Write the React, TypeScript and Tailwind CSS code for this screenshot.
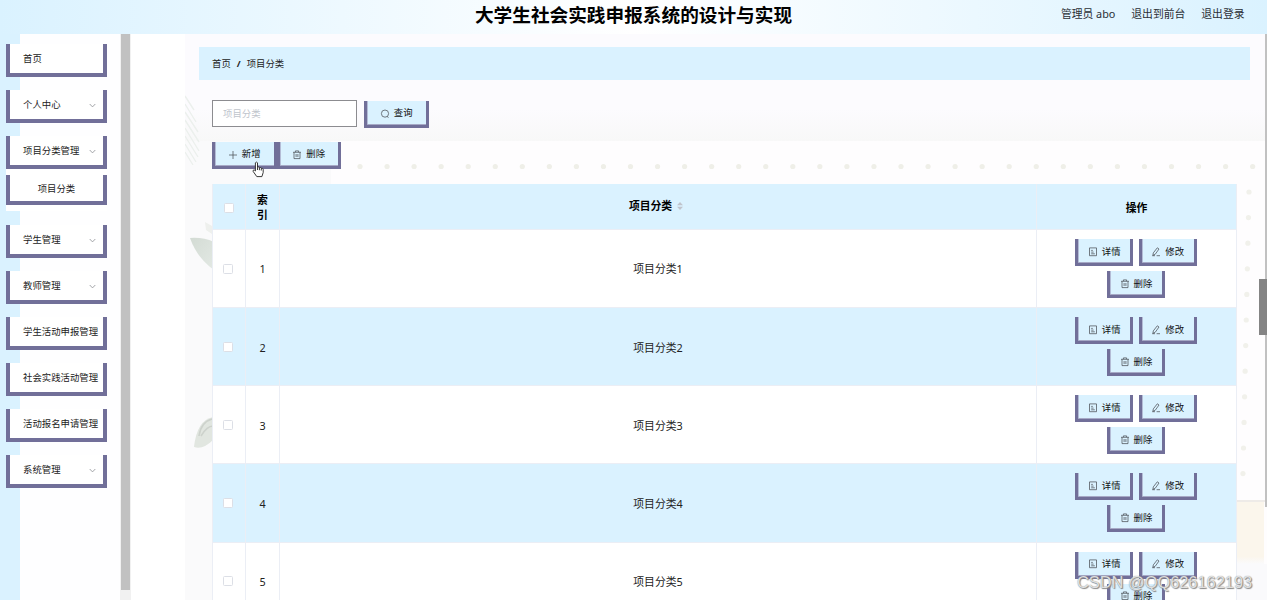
import React from 'react';

const MENU_TOP = [
  { label: '首页', arrow: false },
  { label: '个人中心', arrow: true },
];
const MENU_BOTTOM = [
  { label: '学生管理', arrow: true },
  { label: '教师管理', arrow: true },
  { label: '学生活动申报管理', arrow: false },
  { label: '社会实践活动管理', arrow: false },
  { label: '活动报名申请管理', arrow: false },
  { label: '系统管理', arrow: true },
];
const ROWS = [1, 2, 3, 4, 5];

function Chevron() {
  return (
    <svg className="h-[7px] w-[7px] shrink-0" viewBox="0 0 7 7" fill="none" stroke="#8c8e93" strokeWidth="0.8">
      <path d="M0.7 2L3.5 4.9L6.3 2" />
    </svg>
  );
}

function MenuItem({ label, arrow }: { label: string; arrow: boolean }) {
  return (
    <div className="mb-[13px] flex h-[33px] w-[101px] shrink-0 items-center justify-between border-4 border-t-0 border-[#716f99] bg-white pt-[2px] pr-[7px] pl-[13px] text-[9.4px] whitespace-nowrap text-[#222]">
      <span>{label}</span>
      {arrow && <Chevron />}
    </div>
  );
}

type IconName = 'search' | 'plus' | 'trash' | 'doc' | 'edit';

function Icon({ name }: { name: IconName }) {
  return (
    <svg className="h-[10px] w-[10px] shrink-0" viewBox="0 0 10 10" fill="none" stroke="#4c5057" strokeWidth="0.75">
      {name === 'search' && (
        <>
          <circle cx="5" cy="4.6" r="3.6" />
          <path d="M7.2 7.3L8.4 8.8" />
        </>
      )}
      {name === 'plus' && <path d="M5 1V9M1 5H9" />}
      {name === 'trash' && <path d="M1 2.3H9M3.4 2.2V0.9H6.6V2.2M2 2.4V8.6H8V2.4M4.1 4V7M5.9 4V7" />}
      {name === 'doc' && <path d="M1.5 0.9H8.5V8.7H1.5ZM3.2 3.4H4.8M3.2 5.1H5.6M3.2 6.8H6.8" />}
      {name === 'edit' && <path d="M6.3 0.8L8 2L4.2 7.3L1.9 8.3L2.3 5.9ZM1.2 8.7H4M5.6 8.7H9" />}
    </svg>
  );
}

function Button({ icon, label, wide }: { icon: IconName; label: string; wide?: boolean }) {
  return (
    <button
      className={
        (wide ? 'w-[64.5px] ' : 'w-[58px] ') +
        'flex h-[27px] shrink-0 items-center justify-center gap-[4px] border-x-3 border-b-3 border-[#716f99] bg-[#daf2ff] pt-px text-[9.4px] whitespace-nowrap text-[#111] shadow-[inset_0_-1px_0_#a6a9c6,inset_1px_0_0_#b4bcd6]'
      }
    >
      <Icon name={icon} />
      <span>{label}</span>
    </button>
  );
}

function Checkbox() {
  return <span className="block h-[10px] w-[10px] rounded-[1.5px] border border-[#dcdfe6] bg-white" />;
}

function Backdrop() {
  const top = Array.from({ length: 34 }, (_, i) => 175 + i * 27.05);
  const side = Array.from({ length: 12 }, (_, i) => 158 + i * 25.6);
  return (
    <svg className="pointer-events-none absolute top-0 left-[54px] h-[566px] w-[1082px]" viewBox="0 0 1082 566">
      <defs>
        <linearGradient id="upper" x1="0" y1="0" x2="0" y2="1">
          <stop offset="0.7" stopColor="#fcfbfe" />
          <stop offset="1" stopColor="#f8f8f8" />
        </linearGradient>
        <linearGradient id="leaf" x1="0" y1="0" x2="1" y2="1">
          <stop offset="0" stopColor="#d3dbd4" />
          <stop offset="1" stopColor="#e3e9e4" />
        </linearGradient>
        <linearGradient id="cream" x1="0" y1="0" x2="0" y2="1">
          <stop offset="0.88" stopColor="#fbf6ec" />
          <stop offset="1" stopColor="#fafafc" />
        </linearGradient>
        <filter id="soft">
          <feGaussianBlur stdDeviation="0.7" />
        </filter>
      </defs>
      <rect width="1082" height="566" fill="#fafafb" />
      <rect width="1082" height="107" fill="url(#upper)" />
      <rect x="146" y="107" width="936" height="459" fill="#fefdfe" />
      <g stroke="#ecf0ed" strokeWidth="1.4" filter="url(#soft)">
        <path d="M0 62L9 76M0 70L11 88M0 78L13 98M0 86L14 108M0 94L14 117M0 102L13 123M0 110L11 128M0 118L8 131" />
      </g>
      <g filter="url(#soft)">
        <path d="M5 204Q18 203 29 208V236Q12 224 5 204Z" fill="url(#leaf)" />
        <path d="M20 188L27 192V200L21 196Z" fill="#eef0ed" />
        <path d="M9 413Q12 386 28 383V406Q18 416 9 413Z" fill="#e1e6e0" />
        <path d="M14 402Q16 388 27 385M16 402Q22 392 28 392" fill="none" stroke="#cdd2cc" strokeWidth="1.6" />
        {top.map((x) => (
          <circle key={x} cx={x} cy="132.5" r="2.6" fill="#efefe8" />
        ))}
        {side.map((y, i) => (
          <circle key={y} cx={1064 - i * 0.55} cy={y} r="2.6" fill="#f1f1eb" />
        ))}
      </g>
      <rect x="1051" y="466" width="29" height="2" fill="#eeebe8" />
      <rect x="1051" y="468" width="28" height="62" fill="url(#cream)" />
      <rect x="1051" y="530" width="31" height="36" fill="#fafafc" />
    </svg>
  );
}

const GRID = 'grid grid-cols-[33px_34px_757px_200px]';
const CELL = 'flex items-center justify-center border-r border-b border-[#ebeef5]';

export default function App() {
  return (
    <div className="relative flex h-[600px] w-[1267px] flex-col overflow-hidden bg-white font-['Noto_Sans','Noto_Sans_CJK_SC',sans-serif]">
      <header className="grid h-[34px] shrink-0 grid-cols-[1fr_auto_1fr] items-center bg-[linear-gradient(90deg,#daf2ff_0%,#fff_50%,#daf2ff_100%)]">
        <span />
        <h1 className="pb-[4px] text-[18.67px] leading-[26px] font-bold whitespace-nowrap text-black">
          大学生社会实践申报系统的设计与实现
        </h1>
        <nav className="flex justify-end gap-[16px] pr-[22.5px] pb-[6px] text-[10.8px] text-[#2b2f36]">
          <span>管理员 abo</span>
          <span>退出到前台</span>
          <span>退出登录</span>
        </nav>
      </header>

      <div className="flex h-[566px]">
        <aside className="flex w-[120px] shrink-0 flex-col bg-[linear-gradient(90deg,#daf2ff_20px,#fefeff_20px)] pt-[10px] pl-[6px]">
          {MENU_TOP.map((m) => (
            <MenuItem key={m.label} {...m} />
          ))}
          <div className="mb-[14px] h-[75px] w-[101px] bg-white">
            <div className="-mb-[7px]">
              <MenuItem label="项目分类管理" arrow />
            </div>
            <div className="flex h-[30px] items-center justify-center border-4 border-t-0 border-[#716f99] bg-white pt-[3px] text-[9.4px] text-[#222]">
              项目分类
            </div>
          </div>
          {MENU_BOTTOM.map((m) => (
            <MenuItem key={m.label} {...m} />
          ))}
        </aside>
        <div className="w-[11px] shrink-0 bg-[#f1f1f1] px-px">
          <div className="h-[556px] bg-[#c1c1c1]" />
        </div>

        <main className="relative flex-1 overflow-hidden">
          <Backdrop />
          <div className="relative flex flex-col pt-[13px]">
            <div className="ml-[68px] flex h-[33px] w-[1051px] items-center gap-[6px] bg-[#daf2ff] pt-[2px] pl-[13px] text-[9.4px] text-[#222]">
              <span>首页</span>
              <span className="font-bold">/</span>
              <span>项目分类</span>
            </div>
            <div className="ml-[81px] flex w-[1024px] flex-col">
              <div className="mt-[20px] flex h-[28px] items-end gap-[7px]">
                <div className="flex h-[27px] w-[145px] items-center self-start border border-[#8c8c90] bg-white pt-[2px] pl-[10px] text-[9.4px] text-[#c0c4cc]">
                  项目分类
                </div>
                <Button icon="search" label="查询" wide />
              </div>
              <div className="mt-[14px] flex">
                <Button icon="plus" label="新增" wide />
                <Button icon="trash" label="删除" wide />
              </div>
              <div className="mt-[15px] w-[1025px] border-l border-[#ebeef5]">
                <div className={GRID + ' h-[46px] bg-[#daf2ff] text-[10.8px] font-bold text-black'}>
                  <div className={CELL + ' pt-[3px]'}><Checkbox /></div>
                  <div className={CELL + ' text-center leading-[15px]'}>索<br />引</div>
                  <div className={CELL + ' gap-[5px] pr-[4px] pb-px'}>
                    <span>项目分类</span>
                    <svg className="h-[8px] w-[6px]" viewBox="0 0 6 8" fill="#c0c4cc">
                      <path d="M0 3.3L3 0L6 3.3ZM0 4.7L3 8L6 4.7Z" />
                    </svg>
                  </div>
                  <div className={CELL + ' pt-[3px]'}>操作</div>
                </div>
                {ROWS.map((n) => (
                  <div
                    key={n}
                    className={GRID + ' h-[78.15px] text-[10.8px] text-[#222] ' + (n % 2 === 0 ? 'bg-[#daf2ff]' : 'bg-white')}
                  >
                    <div className={CELL + ' pr-[2px]'}><Checkbox /></div>
                    <div className={CELL + ' pt-[2px]'}>{n}</div>
                    <div className={CELL + ' pt-[2px]'}>项目分类{n}</div>
                    <div className={CELL + ' flex-wrap content-center gap-x-[5.5px] gap-y-[5px] pr-[31px] pl-[30px]'}>
                      <Button icon="doc" label="详情" />
                      <Button icon="edit" label="修改" />
                      <Button icon="trash" label="删除" />
                    </div>
                  </div>
                ))}
              </div>
            </div>
          </div>
        </main>
      </div>

      <div className="absolute top-[34px] right-0 h-[473px] w-[2px] bg-[#c1c1c1]" />
      <div className="absolute top-[279px] right-0 h-[56px] w-[8px] bg-[#848484]" />
      <svg className="absolute top-[161px] left-[252px] h-[17px] w-[13px]" viewBox="0 0 13 17" fill="#fff" stroke="#222" strokeWidth="0.9" strokeLinejoin="round">
        <path d="M3.4 1.8Q4.5 0.4 5.5 1.8V6.2Q6.6 5.5 7.4 6.7Q8.7 6 9.3 7.3Q10.8 6.9 11.2 8.3V11.5L9.9 15.6H4.8L1.2 10.5Q0.7 8.8 2.2 8.9L3.4 10ZM5.5 6.2V9M7.4 6.7V9.2M9.3 7.3V9.5" />
      </svg>
      <div className="absolute top-[570px] left-[1077px] font-['Liberation_Sans',sans-serif] text-[16.4px] leading-[24px] whitespace-nowrap text-white/75 [text-shadow:0_0_1px_#777,1px_1px_1px_#888]">
        CSDN @QQ626162193
      </div>
    </div>
  );
}
